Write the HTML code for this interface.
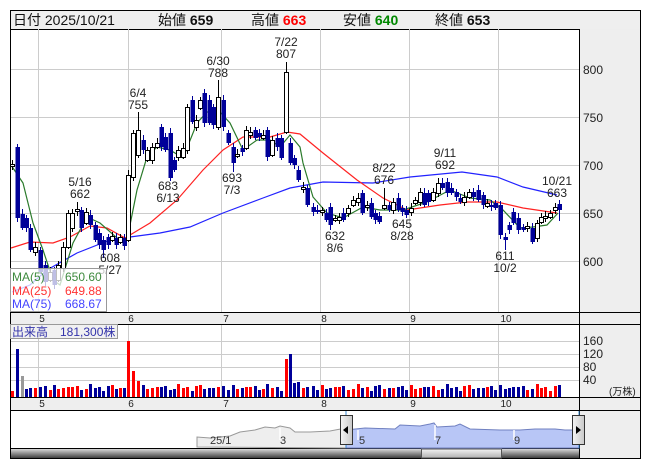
<!DOCTYPE html>
<html><head><meta charset="utf-8"><style>
html,body{margin:0;padding:0;background:#fff;width:653px;height:470px;overflow:hidden}
svg{display:block}
text{font-family:"Liberation Sans","Noto Sans CJK JP",sans-serif}
</style></head><body>
<svg id="s" width="653" height="470" xmlns="http://www.w3.org/2000/svg">
<defs>
<linearGradient id="sb" x1="0" y1="0" x2="0" y2="1"><stop offset="0" stop-color="#d8d8d8"/><stop offset="1" stop-color="#404040"/></linearGradient>
<linearGradient id="th" x1="0" y1="0" x2="0" y2="1"><stop offset="0" stop-color="#f4f4f4"/><stop offset="1" stop-color="#b0b0b0"/></linearGradient>
<linearGradient id="hd" x1="0" y1="0" x2="1" y2="0"><stop offset="0" stop-color="#f4f4f4"/><stop offset="1" stop-color="#c8c8c8"/></linearGradient>
</defs>
<!-- header -->
<rect x="10.5" y="10.5" width="630" height="19" fill="#efefef" stroke="#000"/>
<text x="13" y="25" font-size="14" fill="#111">日付 2025/10/21</text>
<text x="158" y="25" font-size="14" fill="#111">始値 <tspan font-weight="bold">659</tspan></text>
<text x="251" y="25" font-size="14" fill="#111">高値 <tspan font-weight="bold" fill="#f00">663</tspan></text>
<text x="343" y="25" font-size="14" fill="#111">安値 <tspan font-weight="bold" fill="#080">640</tspan></text>
<text x="435" y="25" font-size="14" fill="#111">終値 <tspan font-weight="bold">653</tspan></text>
<!-- right axis bg -->
<rect x="579" y="29" width="61" height="283" fill="#eeeeee"/>
<rect x="579" y="324" width="61" height="73" fill="#eeeeee"/>
<rect x="579" y="410" width="61" height="49" fill="#eeeeee"/>
<!-- axis bands -->
<rect x="10" y="312" width="630" height="12" fill="#eeeeee"/>
<rect x="10" y="397" width="630" height="13" fill="#eeeeee"/>
<g id="grid" stroke="#cccccc" stroke-width="1"></g>
<g id="ma"></g>
<g id="cd"></g>
<g id="vol"></g>
<g id="lab" font-size="12" fill="#222" text-anchor="middle"></g>
<!-- borders -->
<g stroke="#000" fill="none">
<line x1="10.5" y1="29" x2="10.5" y2="459"/>
<line x1="640.5" y1="29" x2="640.5" y2="459"/>
<line x1="579.5" y1="29" x2="579.5" y2="459"/>
<line x1="10" y1="312.5" x2="641" y2="312.5"/>
<line x1="10" y1="324.5" x2="641" y2="324.5"/>
<line x1="10" y1="397.5" x2="641" y2="397.5"/>
<line x1="10" y1="410.5" x2="641" y2="410.5"/>
<line x1="10" y1="448.5" x2="580" y2="448.5"/>
<line x1="10" y1="458.5" x2="641" y2="458.5"/>
</g>
<!-- price axis labels -->
<g font-size="12" fill="#222">
<text x="583" y="74">800</text><text x="583" y="122">750</text><text x="583" y="170">700</text><text x="583" y="218">650</text><text x="583" y="266">600</text>
<text x="583" y="345">160</text><text x="583" y="358">120</text><text x="583" y="371">80</text><text x="583" y="384">40</text>
<text x="609" y="395" font-size="10">(万株)</text>
</g>
<g font-size="10" fill="#222" text-anchor="middle">
<text x="42" y="322">5</text><text x="131" y="322">6</text><text x="226" y="322">7</text><text x="324" y="322">8</text><text x="413" y="322">9</text><text x="506" y="322">10</text>
<text x="42" y="407">5</text><text x="131" y="407">6</text><text x="226" y="407">7</text><text x="324" y="407">8</text><text x="413" y="407">9</text><text x="506" y="407">10</text>
</g>
<!-- legend -->
<rect x="10.5" y="268.5" width="96" height="43" fill="#ffffff" fill-opacity="0.75" stroke="#999"/>
<g font-size="12">
<text x="12" y="281" fill="#3d8a3d">MA(5)</text><text x="65" y="281" fill="#3d8a3d">650.60</text>
<text x="12" y="295" fill="#ff3333">MA(25)</text><text x="65" y="295" fill="#ff3333">649.88</text>
<text x="12" y="308" fill="#4444ff">MA(75)</text><text x="65" y="308" fill="#4444ff">668.67</text>
</g>
<rect x="10.5" y="324.5" width="107" height="14" fill="#f0f0f0" fill-opacity="0.9" stroke="#999"/>
<text x="12" y="336" font-size="12" fill="#3333aa">出来高　181,300株</text>
<!-- navigator -->
<path id="navg" fill="#eeeeee" stroke="#999" stroke-width="1"/>
<path id="navb" fill="#b8c6f6" stroke="#7080c0" stroke-width="1"/>
<g stroke="#fff" stroke-width="1.5"><line x1="358" y1="430" x2="358" y2="440"/><line x1="435" y1="425" x2="435" y2="440"/><line x1="514" y1="430" x2="514" y2="440"/><line x1="280" y1="428" x2="280" y2="440"/></g>
<g font-size="11" fill="#333"><text x="210" y="444">25/1</text><text x="280" y="444">3</text><text x="359" y="444">5</text><text x="435" y="444">7</text><text x="514" y="444">9</text></g>
<line x1="346" y1="411" x2="346" y2="448" stroke="#3a8ad0"/>
<line x1="579" y1="411" x2="579" y2="448" stroke="#3a8ad0"/>
<rect x="340.5" y="415.5" width="12" height="29" fill="url(#hd)" stroke="#333"/>
<path d="M343 430 L348 426 L348 434 Z" fill="#000"/>
<rect x="572.5" y="415.5" width="12" height="29" fill="url(#hd)" stroke="#333"/>
<path d="M581 430 L576 426 L576 434 Z" fill="#000"/>
<rect x="11" y="449" width="568" height="9" fill="url(#sb)"/>
<rect x="421.5" y="449" width="80" height="9" fill="url(#th)" stroke="#555"/>
</svg>
<script>
var NS="http://www.w3.org/2000/svg";
function el(p,t,a,txt){var e=document.createElementNS(NS,t);for(var k in a)e.setAttribute(k,a[k]);if(txt)e.textContent=txt;document.getElementById(p).appendChild(e);return e;}
// grid
[38,128,221,320,409,498].forEach(function(x){el("grid","line",{x1:x+.5,y1:29,x2:x+.5,y2:312});el("grid","line",{x1:x+.5,y1:325,x2:x+.5,y2:397});});
[69,117,165,213,261].forEach(function(y){el("grid","line",{x1:11,y1:y+.5,x2:579,y2:y+.5});});
[341,354,367,380].forEach(function(y){el("grid","line",{x1:11,y1:y+.5,x2:579,y2:y+.5});});
// MA lines
function pl(c,pts){el("ma","polyline",{points:pts,fill:"none",stroke:c,"stroke-width":1.2});}
pl("#2222ff","12,292 30,285 47,270 77,253 110,240 130,237 160,233 190,227 223,213 263,198 290,188 323,182 373,183 410,177 462,172 497,177 523,187 557,195");
pl("#ff2222","11,248 30,242 53,243 70,237 90,226 107,228 125,238 150,223 177,200 203,170 223,150 243,137 270,137 287,132 300,134 323,153 357,180 383,198 407,210 440,205 467,202 497,202 523,208 557,213");
pl("#2a7a2a","11,165 23,183 33,223 43,250 53,280 60,285 73,243 87,217 100,223 117,238 127,240 137,190 147,157 157,147 170,150 183,158 197,123 207,112 218,110 230,123 243,150 257,140 270,140 280,147 290,135 300,147 303,163 313,197 327,213 343,218 363,207 380,210 403,210 427,202 450,190 470,198 490,200 503,210 520,228 533,227 547,225 558,213");
// candles [x,top,bottom,type,high,low]
var C=[[12,164,166,'w',160,170],[17,147,218,'b',144,222],[22,214,228,'b'],[26,218,228,'b'],[30,228,250,'b'],[35,247,252,'w'],[40,250,272,'b'],[45,265,282,'b'],[50,272,280,'w'],[54,270,285,'b'],[58,265,280,'w'],[63,247,268,'w'],[68,213,247,'w'],[72,213,228,'w'],[77,209,211,'w',202,216],[81,210,228,'b'],[86,212,223,'w'],[90,215,225,'b'],[95,225,240,'b'],[99,233,245,'b'],[103,240,250,'b',236,258],[108,237,245,'b'],[112,236,240,'w'],[116,238,245,'b'],[120,237,242,'w'],[124,238,246,'b'],[128,175,240,'w'],[133,133,177,'w'],[138,130,155,'w',112,158],[143,140,150,'b'],[147,150,160,'w'],[152,147,160,'w'],[157,143,147,'w'],[161,127,147,'b'],[165,137,150,'b'],[170,133,178,'b',128,181],[174,160,170,'b'],[178,150,157,'w'],[183,148,157,'w'],[187,107,150,'w'],[192,100,122,'b'],[196,120,127,'w'],[200,100,108,'w'],[204,93,123,'b'],[209,100,123,'b'],[213,107,125,'b'],[218,97,127,'w',80,130],[223,100,127,'b'],[228,133,143,'b'],[233,147,163,'b',143,172],[237,154,156,'w'],[242,148,152,'b'],[246,130,148,'w'],[250,132,135,'w'],[255,130,138,'b'],[259,133,137,'b'],[263,135,138,'w'],[267,130,157,'b'],[272,140,155,'w'],[277,138,147,'b'],[281,138,158,'b'],[286,72,132,'w',62,134],[290,143,163,'b'],[294,158,165,'b'],[298,170,180,'b'],[303,187,189,'w'],[307,188,205,'b'],[313,207,212,'b'],[317,210,212,'b'],[322,210,212,'w'],[326,213,220,'b'],[330,207,225,'b',203,230],[335,218,220,'w'],[339,217,220,'w'],[343,213,220,'b'],[348,208,213,'w'],[353,200,205,'w'],[358,198,202,'w'],[362,193,213,'b'],[367,205,207,'w'],[371,203,217,'b'],[375,213,220,'b'],[379,216,222,'b'],[384,205,208,'w',188,210],[389,205,210,'b'],[393,202,210,'w'],[398,198,210,'b'],[402,208,212,'b'],[406,210,215,'b',206,218],[411,208,212,'w'],[415,200,203,'w'],[420,192,202,'w'],[424,193,205,'b'],[428,193,202,'b'],[433,192,200,'w'],[438,183,193,'w'],[442,183,188,'b',178,190],[447,182,193,'b'],[451,188,193,'b'],[456,192,197,'b'],[460,198,202,'b'],[464,197,202,'w'],[469,192,197,'w'],[473,192,197,'b'],[478,190,200,'b'],[483,195,205,'b'],[487,203,206,'w'],[491,205,207,'b'],[495,203,208,'b'],[500,205,235,'b'],[505,237,240,'b',233,250],[509,225,230,'b'],[513,212,223,'b'],[518,218,230,'b'],[523,227,230,'b'],[527,226,228,'w'],[532,228,242,'b'],[537,223,238,'w'],[541,217,222,'w'],[545,216,218,'w'],[550,213,217,'w'],[555,207,210,'w'],[559,204,210,'b',200,221]];
var spikes={17:[48,'#000099'],22:[21,'#999'],128:[56,'#f00'],133:[26,'#f00'],138:[16,'#f00'],286:[38,'#f00'],290:[43,'#000099'],294:[14,'#000099'],298:[15,'#000099']};
C.forEach(function(c,i){
 var x=c[0],t=c[1],b=c[2],w=c[3]=='w';
 var h=c[4]!==undefined?c[4]:t-3-(i%3),l=c[5]!==undefined?c[5]:b+2+(i%2)*2;
 el("cd","line",{x1:x+.5,y1:h,x2:x+.5,y2:l,stroke:w?"#000":"#000099"});
 if(w) el("cd","rect",{x:x-1.5,y:t+.5,width:4,height:Math.max(1,b-t),fill:"#fff",stroke:"#000"});
 else el("cd","rect",{x:x-1.5,y:t,width:4.5,height:Math.max(1.5,b-t),fill:"#000099"});
 var vh=6+((i*7)%5)+((i*3)%4), col=w?"#f00":"#000099";
 if(spikes[x]){vh=spikes[x][0];col=spikes[x][1];}
 el("vol","rect",{x:x-1,y:397-vh,width:3,height:vh,fill:col});
});
// labels
function lb(x,y,a,b){el("lab","text",{x:x,y:y},a);el("lab","text",{x:x,y:y+12},b);}
lb(80,186,"5/16","662");lb(138,97,"6/4","755");lb(218,65,"6/30","788");lb(286,46,"7/22","807");
lb(384,172,"8/22","676");lb(445,157,"9/11","692");lb(557,185,"10/21","663");
lb(110,262,"608","5/27");lb(168,190,"683","6/13");lb(232,182,"693","7/3");
lb(335,240,"632","8/6");lb(402,228,"645","8/28");lb(505,260,"611","10/2");
// navigator
var g="197,447 197,437 210,438 230,436 240,432 255,430 265,427 275,428 280,426 290,428 295,432 310,432 330,431 346,428";
document.getElementById("navg").setAttribute("d","M"+g.split(" ").join(" L")+" L346,448 Z");
var bp="346,430 365,428 395,429 400,425 420,426 430,424 434,423 437,427 455,426 460,424 470,429 500,430 520,430 535,429 555,429 565,430 579,430";
document.getElementById("navb").setAttribute("d","M346,448 L"+bp.split(" ").join(" L")+" L579,448 Z");
</script>
</body></html>
